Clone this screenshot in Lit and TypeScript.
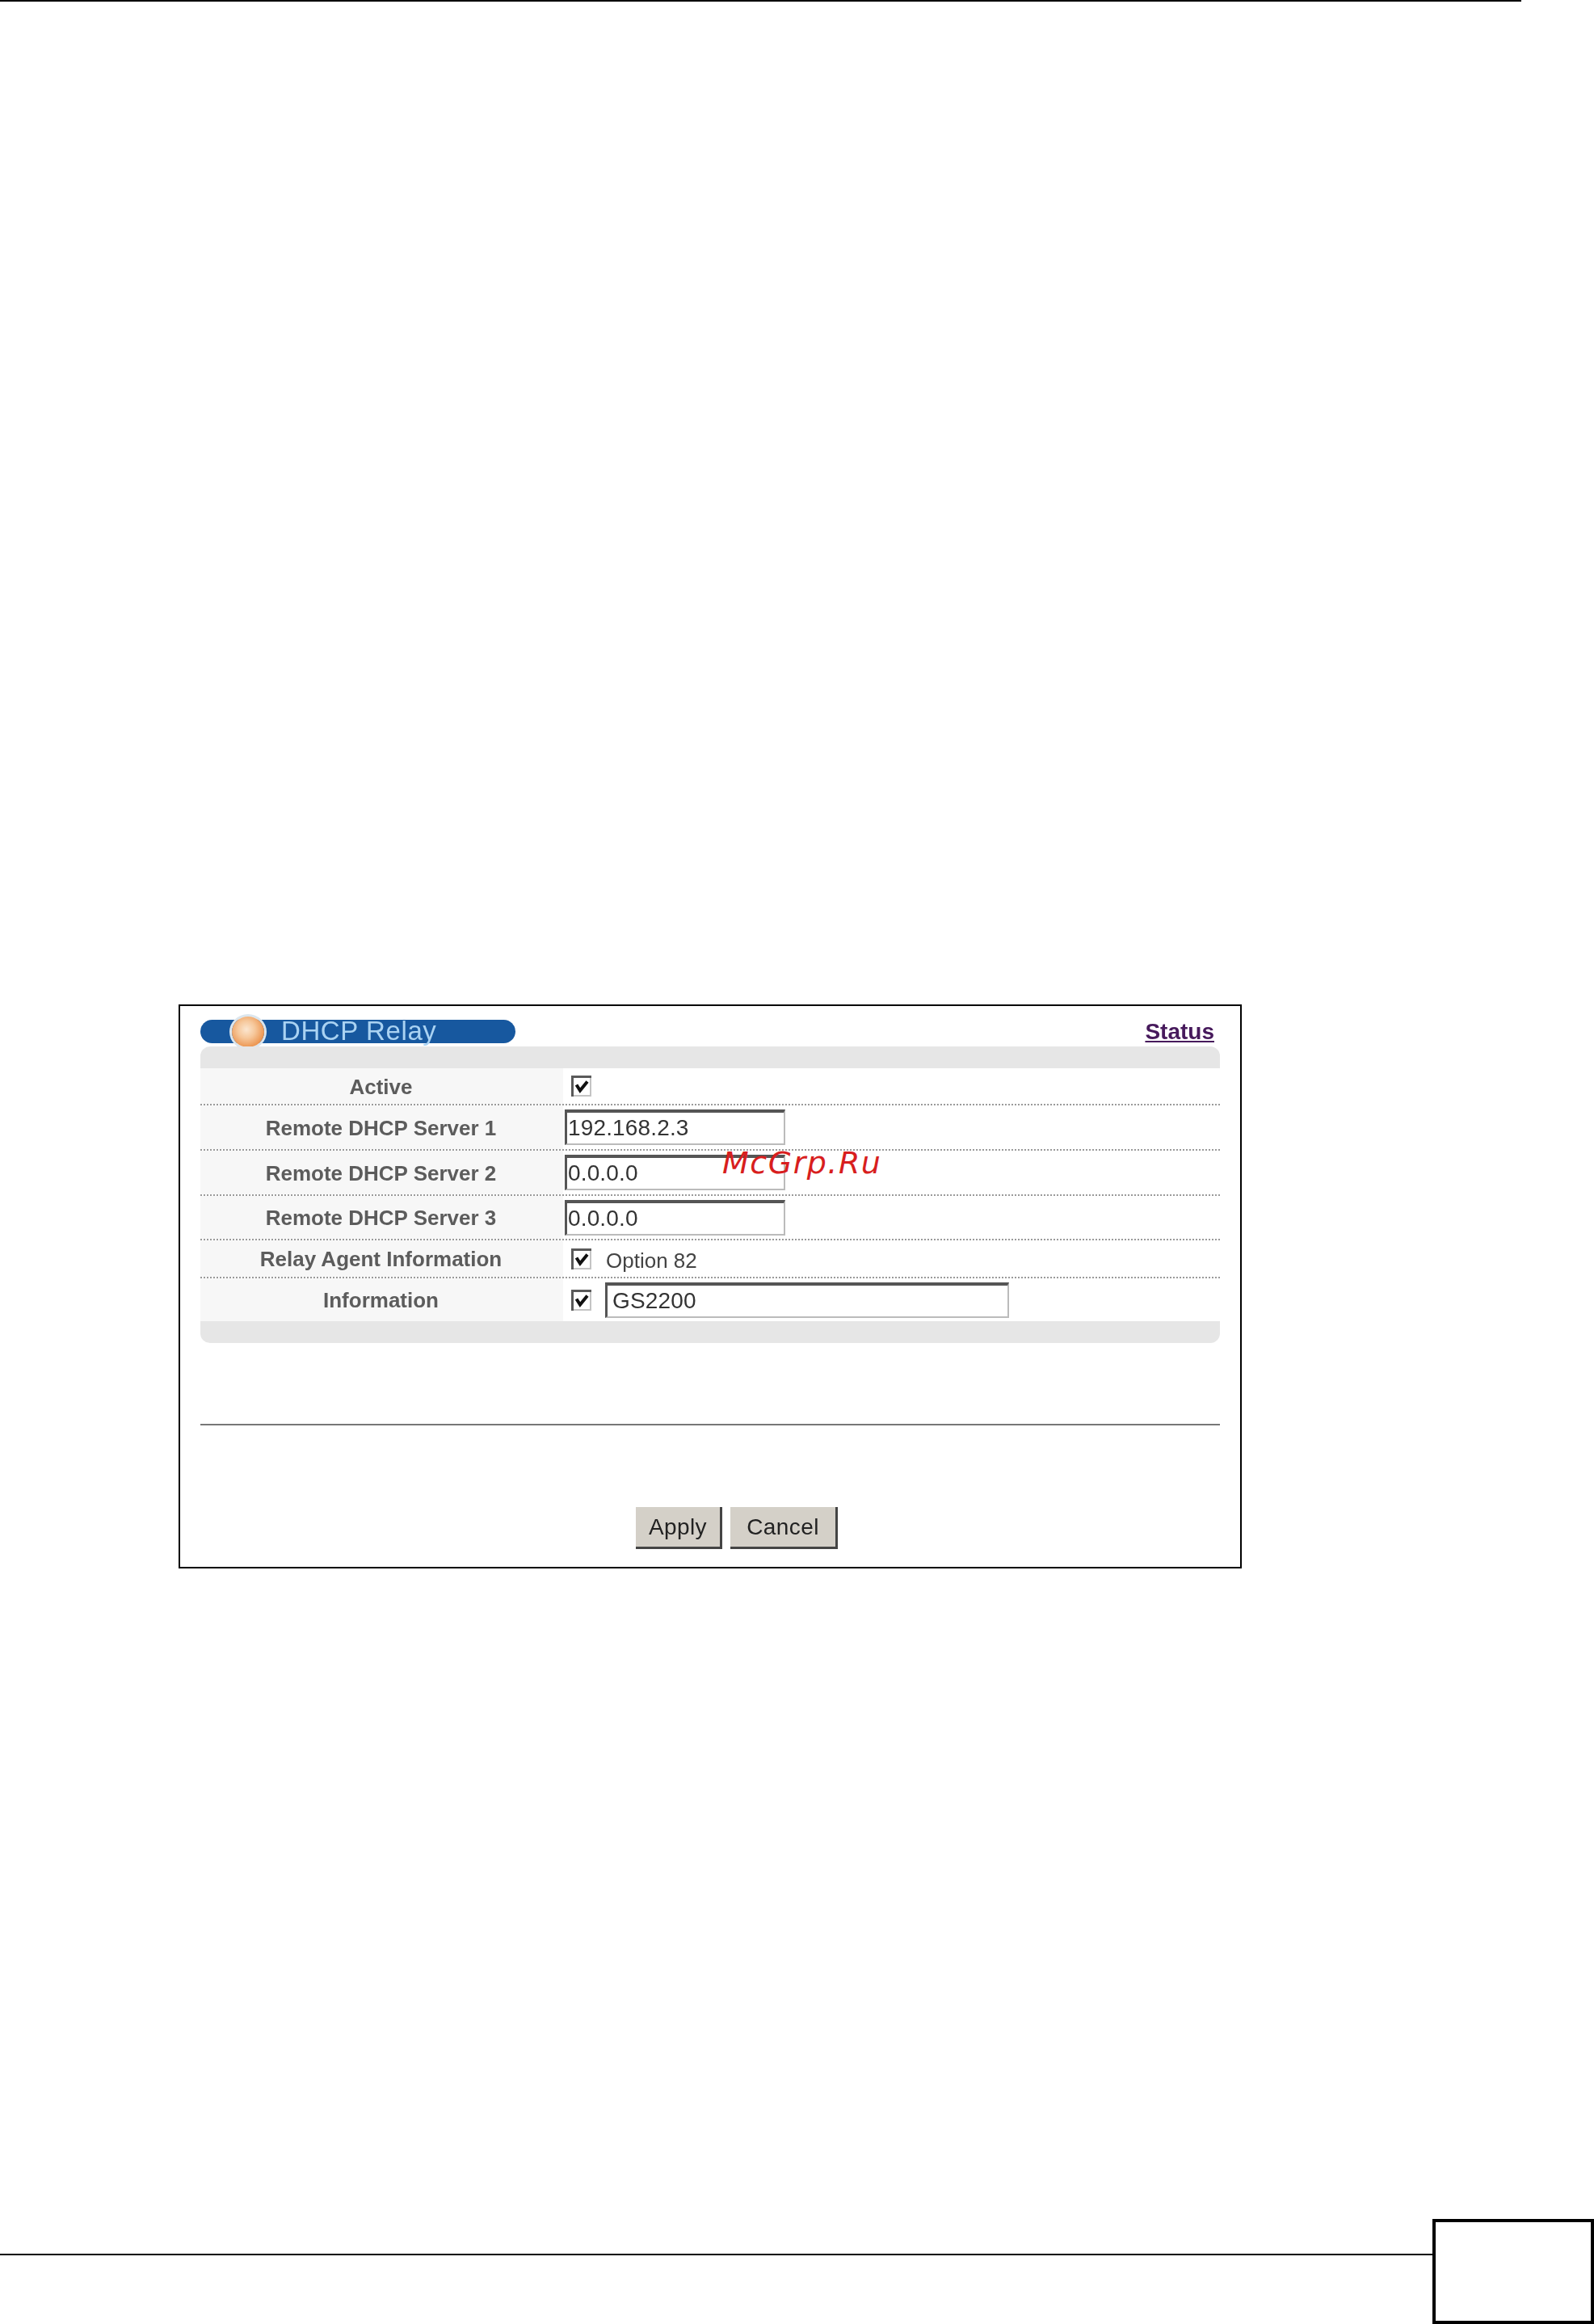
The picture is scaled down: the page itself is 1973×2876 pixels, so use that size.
import { LitElement, html, css, svg } from "lit";
import { customElement } from "lit/decorators.js";

const check = svg`<svg viewBox="0 0 25 26" width="25" height="26" aria-hidden="true">
  <rect x="0" y="0" width="25" height="26" fill="#c4c4c4"/>
  <rect x="0" y="0" width="25" height="3" fill="#5a5a5a"/>
  <rect x="0" y="0" width="3" height="26" fill="#5a5a5a"/>
  <rect x="3" y="3" width="20" height="21" fill="#fff"/>
  <path d="M6.5 11.5l4.5 7 9-11" fill="none" stroke="#111" stroke-width="4"/>
</svg>`;

@customElement("app-root")
export class AppRoot extends LitElement {
  static styles = css`
    :host {
      display: block;
      width: 1973px;
      height: 2876px;
      background: #fff;
      font-family: "Liberation Sans", Arial, sans-serif;
    }
    .page { height: 2876px; display: flex; flex-direction: column; }
    .topline { width: 1883px; height: 2px; background: #000; flex: none; }
    .frame {
      position: relative;
      flex: none;
      box-sizing: border-box;
      width: 1316px;
      height: 698px;
      margin: 1241px 0 0 221px;
      border: 2px solid #000;
    }
    .shot {
      height: 100%;
      box-sizing: border-box;
      padding: 17px 25px 0 25px;
      display: flex;
      flex-direction: column;
      filter: blur(0.55px);
    }
    .title-row {
      display: flex;
      align-items: center;
      justify-content: space-between;
      height: 29px;
      padding-right: 7px;
      margin-bottom: 4px;
      flex: none;
    }
    .pill {
      box-sizing: border-box;
      width: 390px;
      height: 29px;
      border-radius: 15px;
      background: #17589f;
      color: #a9d2f2;
      font-size: 33px;
      line-height: 29px;
      display: flex;
      align-items: center;
      padding-left: 39px;
      gap: 21px;
      white-space: nowrap;
    }
    .title { letter-spacing: 0.6px; margin-top: -3px; }
    .orb {
      flex: none;
      width: 40px;
      height: 38px;
      border-radius: 50%;
      background: radial-gradient(circle at 45% 42%, #fbe6d0 0%, #f6c79a 35%, #ec9550 72%, #d97b35 100%);
      box-shadow: 0 0 0 3px #dbe6ee;
    }
    .status {
      font-size: 28px;
      font-weight: bold;
      color: #471a5c;
      text-decoration: underline;
      line-height: 32px;
    }
    .band { height: 27px; background: #e6e6e6; flex: none; }
    .band.top { border-radius: 12px 12px 0 0; }
    .band.bottom { border-radius: 0 0 12px 12px; }
    .row {
      box-sizing: border-box;
      display: grid;
      grid-template-columns: 449px 1fr;
      flex: none;
      border-bottom: 2px dotted #9a9a9a;
    }
    .row.last { border-bottom: 0; }
    .label {
      box-sizing: border-box;
      background: #f7f7f7;
      display: flex;
      align-items: center;
      justify-content: center;
      padding: 2px 2px 0 0;
      font-size: 26px;
      font-weight: bold;
      color: #5c5c5c;
      white-space: nowrap;
    }
    .value { display: flex; align-items: center; padding-left: 2px; }
    .check { display: block; flex: none; width: 25px; height: 26px; margin-left: 8px; }
    .opt { margin-left: 18px; font-size: 26px; color: #444; line-height: 30px; padding-top: 4px; }
    .field {
      box-sizing: border-box;
      display: flex;
      align-items: center;
      height: 44px;
      width: 273px;
      background: #fff;
      border-style: solid;
      border-width: 4px 2px 2px 3px;
      border-color: #555 #bbb #bbb #555;
      padding-left: 1px;
      font-size: 28px;
      letter-spacing: 0.15px;
      color: #333;
    }
    .field.wide { width: 500px; margin-left: 17px; padding-left: 6px; }
    .rule { height: 2px; background: #777; margin-top: 100px; flex: none; }
    .actions {
      display: flex;
      justify-content: center;
      gap: 10px;
      margin-top: 101px;
      padding-left: 66px;
      flex: none;
    }
    .btn {
      box-sizing: border-box;
      height: 52px;
      display: flex;
      align-items: center;
      justify-content: center;
      background: #d4d0c8;
      border-right: 3px solid #444;
      border-bottom: 3px solid #444;
      font-size: 28px;
      letter-spacing: 0.4px;
      color: #222;
    }
    .btn.apply { width: 107px; }
    .btn.cancel { width: 133px; }
    .mark {
      position: absolute;
      left: 671px;
      top: 171px;
      font-family: "DejaVu Sans", sans-serif;
      font-style: italic;
      font-size: 38px;
      line-height: 46px;
      letter-spacing: 1.5px;
      color: #d81e1e;
      white-space: nowrap;
    }
    .footer { margin-top: auto; display: flex; align-items: flex-start; flex: none; }
    .footline { flex: 1; height: 2px; margin-top: 43px; background: #000; }
    .pagebox { box-sizing: border-box; width: 200px; height: 130px; border: 4px solid #000; }
  `;

  private row(label: string, height: number, value: unknown, last = false) {
    return html`<div class="row ${last ? "last" : ""}" style="height:${height}px">
      <div class="label">${label}</div>
      <div class="value">${value}</div>
    </div>`;
  }

  render() {
    const box = html`<span class="check">${check}</span>`;
    return html`<div class="page">
      <div class="topline"></div>
      <div class="frame">
        <div class="shot">
          <div class="title-row">
            <div class="pill"><span class="orb"></span><span class="title">DHCP Relay</span></div>
            <span class="status">Status</span>
          </div>
          <div class="band top"></div>
          ${this.row("Active", 46, box)}
          ${this.row("Remote DHCP Server 1", 56, html`<div class="field">192.168.2.3</div>`)}
          ${this.row("Remote DHCP Server 2", 56, html`<div class="field">0.0.0.0</div>`)}
          ${this.row("Remote DHCP Server 3", 55, html`<div class="field">0.0.0.0</div>`)}
          ${this.row("Relay Agent Information", 47, html`${box}<span class="opt">Option 82</span>`)}
          ${this.row("Information", 53, html`${box}<div class="field wide">GS2200</div>`, true)}
          <div class="band bottom"></div>
          <div class="rule"></div>
          <div class="actions">
            <div class="btn apply">Apply</div>
            <div class="btn cancel">Cancel</div>
          </div>
        </div>
        <div class="mark">McGrp.Ru</div>
      </div>
      <div class="footer">
        <div class="footline"></div>
        <div class="pagebox"></div>
      </div>
    </div>`;
  }
}
